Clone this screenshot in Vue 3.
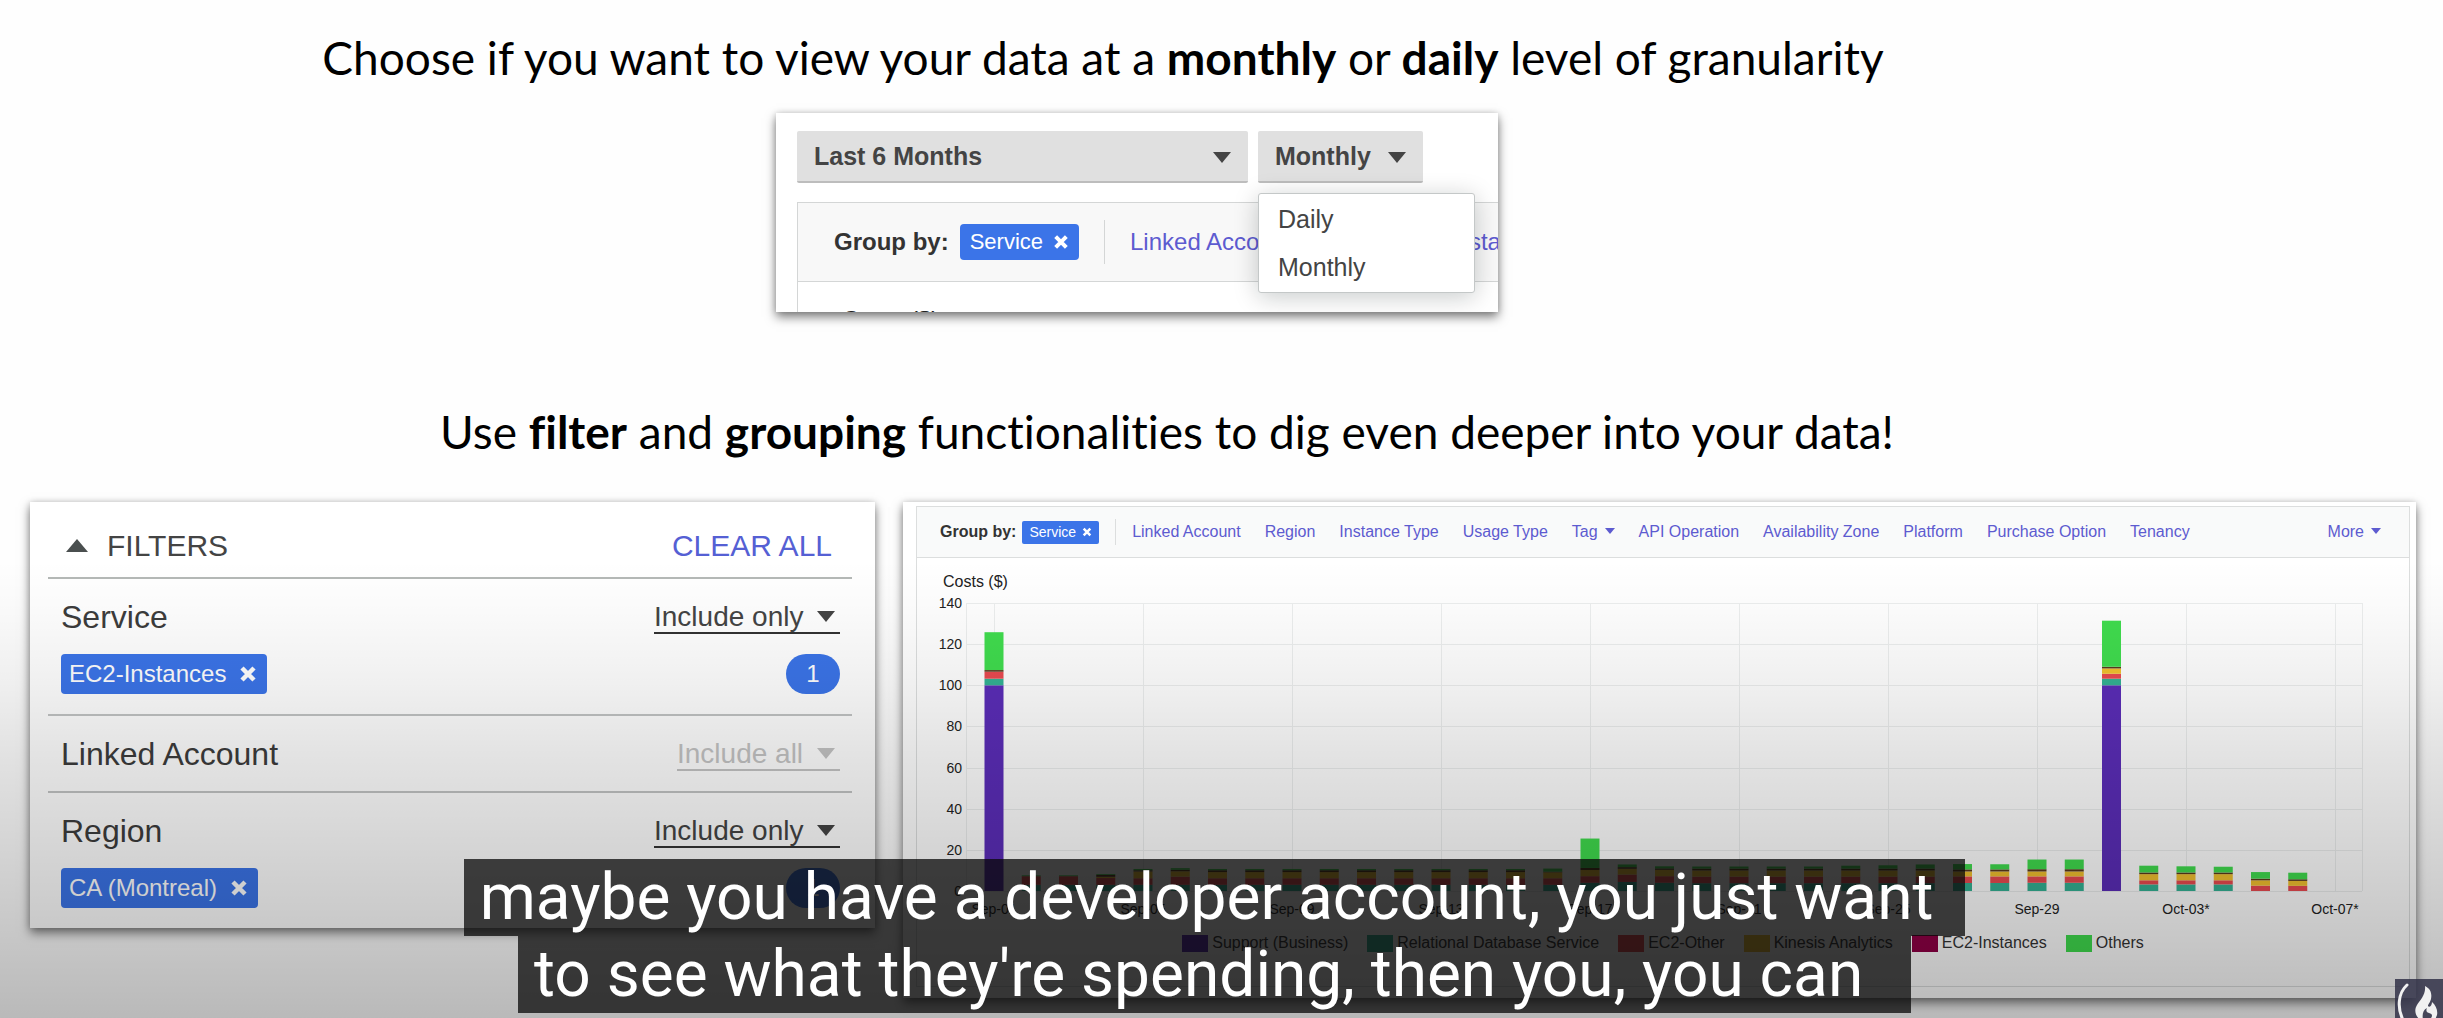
<script setup>
import { ref } from 'vue'

const range = ref('Last 6 Months')
const granularity = ref('Monthly')
const granularities = ['Daily', 'Monthly']

const filters = [
  { id: 'service', name: 'Service', mode: 'Include only', chip: 'EC2-Instances', count: 1 },
  { id: 'account', name: 'Linked Account', mode: 'Include all' },
  { id: 'region', name: 'Region', mode: 'Include only', chip: 'CA (Montreal)', count: 1 },
]

const dimensions = [
  { label: 'Linked Account' },
  { label: 'Region' },
  { label: 'Instance Type' },
  { label: 'Usage Type' },
  { label: 'Tag', menu: true },
  { label: 'API Operation' },
  { label: 'Availability Zone' },
  { label: 'Platform' },
  { label: 'Purchase Option' },
  { label: 'Tenancy' },
]

const series = [
  { name: 'Support (Business)', color: '#5b2db8' },
  { name: 'Relational Database Service', color: '#34b294' },
  { name: 'EC2-Other', color: '#ea4a50' },
  { name: 'Kinesis Analytics', color: '#f2c12e' },
  { name: 'EC2-Instances', color: '#8f0045' },
  { name: 'Others', color: '#40dc4e' },
]
const thinLine = '#5c3a1c'

// Daily cost in dollars, one value per series in legend order.
const usual = [0, 3, 3.2, 3, 0.9, 0.6]
const days = [
  [100, 3.2, 3.4, 0, 0.8, 18.4],
  [0, 3, 4.2, 0, 0, 0.4],
  [0, 3, 4.2, 0, 0, 0.4],
  [0, 3, 3.3, 0.6, 0.9, 0.4],
  [0, 3, 3.2, 3.3, 0.6, 0.6],
  [0, 3, 4, 2.6, 0.7, 0.8],
  ...Array.from({ length: 9 }, () => usual),
  [0, 3, 3.2, 2.9, 0.3, 1.5],
  [0, 4, 3.2, 3, 1, 14.3],
  [0, 4.4, 3.6, 2.8, 0.8, 1.3],
  [0, 4, 3.2, 3.1, 0.7, 1],
  [0, 3.8, 3.2, 3, 0.9, 1],
  [0, 3.8, 3.2, 3, 0.9, 1],
  [0, 3.8, 3.2, 3, 0.9, 1],
  [0, 3.8, 3.2, 3, 0.9, 1],
  [0, 3.8, 3.2, 3, 0.9, 1.4],
  [0, 3.8, 3.2, 3, 0.9, 1.6],
  [0, 3.8, 3.2, 3, 0.9, 2],
  [0, 3.9, 3.2, 2.4, 1, 2.6],
  [0, 3.9, 3.2, 2.4, 1, 2.5],
  [0, 4, 3.1, 2.4, 1.1, 4.7],
  [0, 4, 3.1, 2.4, 1.1, 4.7],
  [100, 3.2, 2.4, 2.6, 0.8, 22.4],
  [0, 3.2, 2, 3, 0.8, 3.3],
  [0, 3.2, 2, 3, 0.8, 3],
  [0, 3.2, 2, 3, 0.8, 2.8],
  [0, 0, 2.6, 2.6, 0.8, 3.2],
  [0, 0, 2.5, 2.4, 0.8, 3.2],
]

const base = 297
const perDollar = 288 / 140
const firstX = 77
const dayStep = 37.25
const barWidth = 19

const bars = days.map((values, i) => {
  let y = base
  const parts = []
  values.forEach((v, s) => {
    if (!v) return
    const h = v * perDollar
    y -= h
    parts.push({ y, h, color: s === 4 ? thinLine : series[s].color })
  })
  return { x: firstX + i * dayStep - barWidth / 2, parts }
})

const yTicks = [140, 120, 100, 80, 60, 40, 20, 0].map((v) => ({ v, y: Math.round(base - v * perDollar) }))
const xTicks = ['Sep-01', 'Sep-05', 'Sep-09', 'Sep-13', 'Sep-17', 'Sep-21', 'Sep-25', 'Sep-29', 'Oct-03*', 'Oct-07*'].map(
  (label, i) => ({ label, x: Math.round(firstX + i * 4 * dayStep) })
)
</script>

<template>
  <main class="slide">
    <h1 class="headline first">
      Choose if you want to view your data at a <b>monthly</b> or <b>daily</b> level of granularity
    </h1>

    <section class="panel picker" aria-label="Date range">
      <div class="picker-row">
        <div class="drop wide">
          <select v-model="range" aria-label="Range"><option>Last 6 Months</option></select>
        </div>
        <div class="drop narrow">
          <select v-model="granularity" aria-label="Granularity">
            <option v-for="g in granularities" :key="g">{{ g }}</option>
          </select>
          <ul class="menu">
            <li v-for="g in granularities" :key="g">
              <button type="button" @click="granularity = g">{{ g }}</button>
            </li>
          </ul>
        </div>
      </div>
      <div class="picker-box">
        <div class="group-large">
          <strong>Group by:</strong>
          <button type="button" class="chip">
            Service
            <svg class="cross" viewBox="0 0 12 12"><path d="M2 2 10 10M10 2 2 10" /></svg>
          </button>
          <span class="rule"></span>
          <a href="#">Linked Account</a>
          <a href="#">Region</a>
          <a href="#">Instance Type</a>
        </div>
        <div class="costs-large">Costs ($)</div>
      </div>
    </section>

    <h2 class="headline second">
      Use <b>filter</b> and <b>grouping</b> functionalities to dig even deeper into your data!
    </h2>

    <div class="columns">
      <section class="panel filters" aria-label="Filters">
        <header class="filters-head">
          <button type="button" class="toggle"><span class="up"></span>FILTERS</button>
          <button type="button" class="clear">CLEAR ALL</button>
        </header>
        <div v-for="f in filters" :key="f.id" class="filter">
          <div class="filter-line">
            <label :for="f.id">{{ f.name }}</label>
            <div class="mode" :class="{ off: !f.chip }">
              <select :id="f.id"><option>{{ f.mode }}</option></select>
            </div>
          </div>
          <div v-if="f.chip" class="filter-line chips">
            <button type="button" class="chip">
              {{ f.chip }}
              <svg class="cross" viewBox="0 0 12 12"><path d="M2 2 10 10M10 2 2 10" /></svg>
            </button>
            <span class="badge">{{ f.count }}</span>
          </div>
        </div>
      </section>

      <section class="panel chart" aria-label="Costs by service">
        <div class="chart-box">
          <nav class="toolbar">
            <strong>Group by:</strong>
            <button type="button" class="chip">
              Service
              <svg class="cross" viewBox="0 0 12 12"><path d="M2 2 10 10M10 2 2 10" /></svg>
            </button>
            <span class="rule"></span>
            <div class="links">
              <a v-for="d in dimensions" :key="d.label" href="#" :class="{ caret: d.menu }">{{ d.label }}</a>
            </div>
            <a href="#" class="caret more">More</a>
          </nav>
          <div class="costs">Costs ($)</div>
          <svg class="plot" viewBox="0 0 1492 326">
            <g class="grid">
              <rect v-for="t in yTicks" :key="t.v" x="49" :y="t.y" width="1396" height="1" />
              <rect v-for="t in xTicks" :key="t.label" :x="t.x" y="9" width="1" height="288" />
              <rect x="49" y="9" width="1" height="288" />
              <rect x="1445" y="9" width="1" height="288" />
            </g>
            <g v-for="(b, i) in bars" :key="i">
              <rect v-for="(p, j) in b.parts" :key="j" :x="b.x" :y="p.y" :width="barWidth" :height="p.h" :fill="p.color" />
            </g>
            <text v-for="t in yTicks" :key="t.v" x="45" :y="t.y + 5" text-anchor="end">{{ t.v }}</text>
            <text v-for="t in xTicks" :key="t.label" :x="t.x" y="320" text-anchor="middle">{{ t.label }}</text>
          </svg>
          <ul class="legend">
            <li v-for="s in series" :key="s.name"><i :style="{ background: s.color }"></i>{{ s.name }}</li>
          </ul>
        </div>
      </section>
    </div>

    <div class="shade"></div>

    <div class="logo">
      <svg viewBox="0 0 48 39">
        <path d="M12 6C3 14 2 29 8 41" fill="none" stroke="#f1f1f1" stroke-width="3" stroke-linecap="round" />
        <path
          d="M30 7C36 10 37 15 36 20C35 24 33 25 33 27C34 29 37 27 37 23C41 26 43 32 42 36L40 41H34C38 38 38 35 34 34C31 33 31 31 32 29C28 31 27 35 28 41H25C20 36 19 31 22 26C25 21 31 16 30 7Z"
          fill="#f1f1f1"
        />
      </svg>
    </div>

    <div class="captions">
      <p>maybe you have a developer account, you just want&nbsp;</p>
      <p>to see what they're spending, then you, you can&nbsp;&nbsp;</p>
    </div>
  </main>
</template>

<style>
body {
  margin: 0;
  background: #fff;
}
</style>

<style scoped>
.slide {
  position: relative;
  box-sizing: border-box;
  padding: 30px 27px 20px 30px;
  overflow: hidden;
  background: #fefefe;
  color: #444;
  font-family: 'Liberation Sans', Arial, sans-serif;
}
button,
select {
  margin: 0;
  padding: 0;
  border: 0;
  background: none;
  color: inherit;
  font: inherit;
  cursor: pointer;
}
select {
  appearance: none;
}
a {
  color: #5d5bd0;
  text-decoration: none;
  white-space: nowrap;
}
ul {
  margin: 0;
  padding: 0;
  list-style: none;
}
strong {
  color: #333;
  white-space: nowrap;
}
.headline {
  margin: 0;
  color: #000;
  font: 400 46px/56px Lato, sans-serif;
  font-variant-ligatures: none;
  text-align: center;
}
.headline b {
  font-weight: 700;
}
.first {
  padding-right: 240px;
}
.second {
  margin-top: 92px;
  padding-right: 112px;
}
.panel {
  box-sizing: border-box;
  background: #fff;
  box-shadow: 0 5px 10px rgba(0, 0, 0, 0.5), 0 0 6px rgba(0, 0, 0, 0.15);
}
.chip {
  display: inline-flex;
  align-items: center;
  border-radius: 4px;
  background: #3b74e8;
  color: #fff;
  white-space: nowrap;
}
.cross path {
  fill: none;
  stroke: #fff;
  stroke-width: 3;
}

.picker {
  width: 722px;
  max-width: 100%;
  height: 199px;
  margin: 27px auto 0;
  padding: 18px 0 0 21px;
  overflow: hidden;
  font-size: 25px;
  position: relative;
  left: -86px;
}
.picker-row {
  display: flex;
  gap: 10px;
}
.drop {
  position: relative;
}
.drop select {
  width: 100%;
  height: 52px;
  padding: 0 17px;
  border-bottom: 2px solid #bdbdbd;
  border-radius: 2px;
  background: #e0e0e0;
  font-weight: 700;
}
.drop::after,
.mode::after {
  position: absolute;
  content: '';
  border: 9px solid transparent;
  border-top: 11px solid #444;
  border-bottom: 0;
  pointer-events: none;
}
.drop::after {
  top: 21px;
  right: 17px;
}
.wide {
  width: 451px;
}
.narrow {
  width: 165px;
}
.menu {
  position: absolute;
  z-index: 1;
  top: 62px;
  left: 0;
  box-sizing: border-box;
  width: 217px;
  padding: 1px 0;
  border: 1px solid #c4c8c8;
  border-radius: 3px;
  background: #fff;
  box-shadow: 0 4px 24px rgba(0, 20, 20, 0.22);
}
.menu button {
  display: block;
  width: 100%;
  height: 48px;
  padding-left: 19px;
  text-align: left;
}
.picker-box {
  margin-top: 19px;
  border: 1px solid #d4d6d6;
  border-right: 0;
}
.group-large {
  display: flex;
  align-items: center;
  height: 78px;
  padding-left: 36px;
  border-bottom: 1px solid #d4d6d6;
  background: #f8f8f8;
  font-size: 24px;
}
.group-large .chip {
  height: 36px;
  margin-left: 11px;
  padding: 0 10px;
  gap: 10px;
  font-size: 22px;
}
.group-large .cross {
  width: 16px;
}
.group-large .rule {
  flex: none;
  width: 1px;
  height: 44px;
  margin: 0 25px;
  background: #d4d6d6;
}
.group-large a {
  margin-right: 40px;
}
.costs-large {
  padding: 24px 0 0 44px;
  color: #222;
  font-size: 24px;
}

.columns {
  display: grid;
  grid-template-columns: 845fr 1513fr;
  align-items: start;
  gap: 28px;
  margin-top: 42px;
}
.filters {
  min-width: 0;
  padding: 0 23px 0 18px;
}
.filters-head {
  display: flex;
  align-items: center;
  justify-content: space-between;
  height: 75px;
  padding: 12px 20px 0 18px;
  box-sizing: border-box;
  font-size: 30px;
}
.toggle {
  display: flex;
  align-items: center;
  gap: 19px;
}
.up {
  border: 11px solid transparent;
  border-top: 0;
  border-bottom: 13px solid #4a4f4f;
}
.clear {
  color: #5560d4;
}
.filter {
  padding: 21px 12px 20px 13px;
  border-top: 2px solid #b4b8b6;
}
.filter + .filter {
  border-top-color: #c2c4c4;
}
.filter-line {
  display: flex;
  align-items: center;
  justify-content: space-between;
}
.filter-line label {
  color: #3c3c3c;
  font-size: 32px;
  line-height: 32px;
}
.mode {
  position: relative;
}
.mode select {
  display: block;
  height: 34px;
  padding-right: 36px;
  border-bottom: 2px solid #333;
  border-radius: 0;
  font-size: 28px;
}
.mode::after {
  top: 11px;
  right: 5px;
}
.mode.off {
  color: #c4c4c4;
}
.mode.off select {
  border-color: #c4c4c4;
}
.mode.off::after {
  border-top-color: #c4c4c4;
}
.chips {
  margin-top: 20px;
  font-size: 24px;
}
.chips .chip {
  height: 40px;
  padding: 0 10px 0 8px;
  gap: 13px;
}
.chips .cross {
  width: 18px;
}
.badge {
  width: 54px;
  border-radius: 20px;
  background: #3b74e8;
  color: #fff;
  line-height: 40px;
  text-align: center;
}

.chart {
  min-width: 0;
  padding: 4px 6px 11px 13px;
}
.chart-box {
  border: 1px solid #dcdede;
  padding-bottom: 33px;
}
.toolbar {
  display: flex;
  align-items: center;
  height: 50px;
  padding: 0 28px 0 23px;
  border-bottom: 1px solid #dcdede;
  background: #f9fafa;
  font-size: 16px;
}
.toolbar .chip {
  height: 23px;
  margin-left: 6px;
  padding: 0 7px;
  gap: 6px;
  border-radius: 2px;
  font-size: 14px;
}
.toolbar .cross {
  width: 10px;
}
.toolbar .rule {
  width: 1px;
  height: 26px;
  margin: 0 16px;
  background: #dcdede;
}
.links {
  display: flex;
  gap: 24px;
}
.caret::after {
  display: inline-block;
  margin: 0 0 3px 7px;
  content: '';
  border: 5px solid transparent;
  border-top: 6px solid #5d5bd0;
  border-bottom: 0;
}
.more {
  margin-left: auto;
}
.costs {
  padding: 12px 0 0 26px;
  color: #222;
  font-size: 16px;
  line-height: 24px;
}
.plot {
  display: block;
  width: 100%;
}
.plot text {
  fill: #222;
  font-size: 14px;
}
.grid rect {
  fill: #eceeee;
}
.legend {
  display: flex;
  justify-content: center;
  gap: 19px;
  margin-top: 13px;
  color: #333;
  font-size: 16px;
  line-height: 20px;
  white-space: nowrap;
}
.legend li {
  display: flex;
  align-items: center;
  gap: 4px;
}
.legend i {
  width: 26px;
  height: 17px;
}

.shade {
  position: absolute;
  inset: 0;
  background: linear-gradient(
    transparent 55%,
    rgba(0, 0, 0, 0.02) 60%,
    rgba(0, 0, 0, 0.06) 67%,
    rgba(0, 0, 0, 0.11) 74%,
    rgba(0, 0, 0, 0.21) 91%,
    rgba(0, 0, 0, 0.27)
  );
  pointer-events: none;
}
.logo {
  position: absolute;
  right: 0;
  bottom: 0;
  width: 48px;
  height: 39px;
  overflow: hidden;
  background: rgba(48, 48, 70, 0.84);
}
.logo svg {
  display: block;
}
.captions {
  position: absolute;
  right: 0;
  bottom: 5px;
  left: 0;
  display: flex;
  flex-direction: column;
  align-items: center;
  margin-right: 14px;
  pointer-events: none;
}
.captions p {
  margin: 0;
  padding: 0 16px;
  background: rgba(8, 8, 8, 0.75);
  color: #fff;
  font: 400 64px/77px Roboto, sans-serif;
  white-space: nowrap;
}
</style>
